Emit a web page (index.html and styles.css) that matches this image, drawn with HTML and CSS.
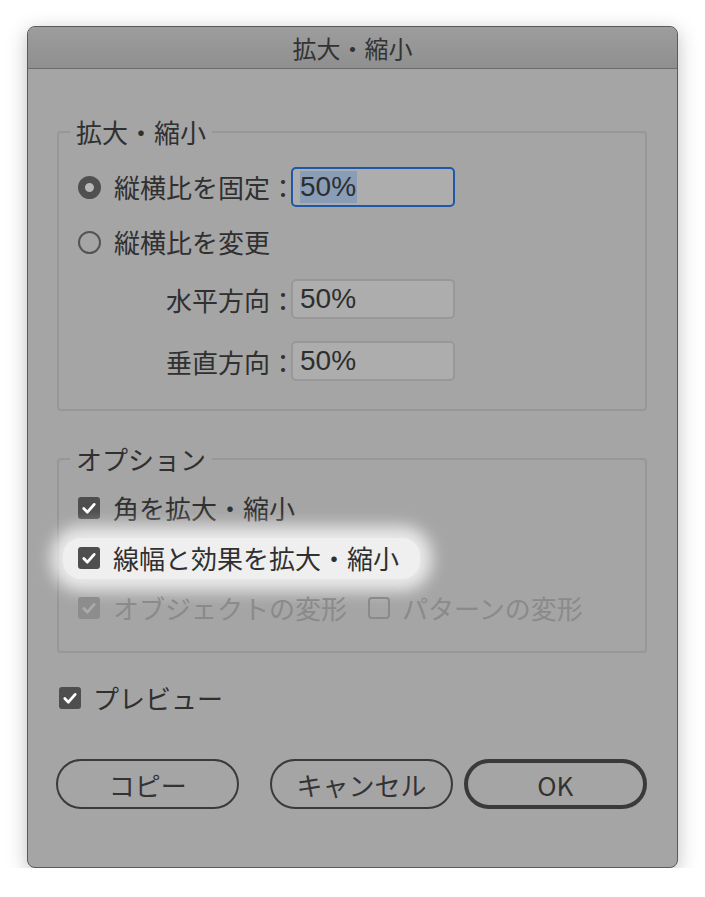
FILE: index.html
```
<!DOCTYPE html>
<html lang="ja">
<head>
<meta charset="utf-8">
<title>拡大・縮小</title>
<link rel="stylesheet" href="styles.css">
</head>
<body>
<div class="dialog">
  <div class="titlebar">拡大・縮小</div>
  <div class="content">
    <fieldset class="group group-scale">
      <legend>拡大・縮小</legend>
      <div class="row r1">
        <div class="opt"><span class="radio on"></span><span>縦横比を固定：</span></div>
        <div class="field focus"><span class="sel">50%</span></div>
      </div>
      <div class="row r2">
        <div class="opt"><span class="radio"></span><span>縦横比を変更</span></div>
      </div>
      <div class="row r3">
        <div class="lbl">水平方向：</div>
        <div class="field"><span>50%</span></div>
      </div>
      <div class="row r4">
        <div class="lbl">垂直方向：</div>
        <div class="field"><span>50%</span></div>
      </div>
    </fieldset>

    <fieldset class="group group-opts">
      <legend>オプション</legend>
      <div class="crow">
        <div class="opt"><svg class="cb" viewBox="0 0 22 22"><rect width="22" height="22" rx="3" fill="#4e4e4e"/><path d="M5.8 11.6 L9.4 15.2 L16.2 7.4" fill="none" stroke="#fff" stroke-width="2.8" stroke-linecap="round" stroke-linejoin="round"/></svg><span>角を拡大・縮小</span></div>
      </div>
      <div class="crow">
        <div class="opt glow"><svg class="cb" viewBox="0 0 22 22"><rect width="22" height="22" rx="3" fill="#4e4e4e"/><path d="M5.8 11.6 L9.4 15.2 L16.2 7.4" fill="none" stroke="#fff" stroke-width="2.8" stroke-linecap="round" stroke-linejoin="round"/></svg><span>線幅と効果を拡大・縮小</span></div>
      </div>
      <div class="crow disabled">
        <div class="opt"><svg class="cb" viewBox="0 0 22 22"><rect width="22" height="22" rx="3" fill="#8d8d8d"/><path d="M5.8 11.6 L9.4 15.2 L16.2 7.4" fill="none" stroke="#ababab" stroke-width="2.8" stroke-linecap="round" stroke-linejoin="round"/></svg><span>オブジェクトの変形</span></div>
        <div class="opt opt2"><svg class="cb" viewBox="0 0 22 22"><rect x="1" y="1" width="20" height="20" rx="3" fill="none" stroke="#8a8a8a" stroke-width="2"/></svg><span>パターンの変形</span></div>
      </div>
    </fieldset>

    <div class="crow preview">
      <div class="opt"><svg class="cb" viewBox="0 0 22 22"><rect width="22" height="22" rx="3" fill="#4e4e4e"/><path d="M5.8 11.6 L9.4 15.2 L16.2 7.4" fill="none" stroke="#fff" stroke-width="2.8" stroke-linecap="round" stroke-linejoin="round"/></svg><span>プレビュー</span></div>
    </div>

    <div class="buttons">
      <div class="btn copy">コピー</div>
      <div class="btn cancel">キャンセル</div>
      <div class="btn ok">OK</div>
    </div>
  </div>
</div>
</body>
</html>
```
FILE: styles.css
```
* { box-sizing: border-box; }
html, body { margin: 0; padding: 0; background: #ffffff; }
body {
  font-family: "Noto Sans CJK JP", "Noto Sans", sans-serif;
  color: #303030;
  padding: 26px 0 0 27px;
}
.dialog {
  width: 651px;
  height: 842px;
  background: #a5a5a5;
  border: 1px solid #5a5a5a;
  border-radius: 8px;
  box-shadow: 0 5px 20px rgba(0,0,0,0.25);
  overflow: hidden;
}
.titlebar {
  height: 42px;
  background: linear-gradient(#9d9d9d, #8f8f8f);
  border-bottom: 1px solid #6c6c6c;
  text-align: center;
  font-size: 24px;
  line-height: 41px;
  color: #333;
}
.content {
  padding: 48px 30px 0 29px;
}
.group {
  margin: 0;
  border: 2px solid #979797;
  border-radius: 4px;
  padding: 0 19px;
  min-width: 0;
}
.group legend {
  font-size: 26px;
  line-height: 30px;
  padding: 0 6px;
  margin-left: -8px;
}
.group-scale { padding-top: 20px; padding-bottom: 28px; }
.row {
  display: grid;
  grid-template-columns: 218px 164px;
  align-items: center;
  height: 40px;
  font-size: 26px;
}
.r2 { margin-top: 15px; }
.r3 { margin-top: 17px; }
.r4 { margin-top: 22px; }
.opt {
  display: flex;
  align-items: center;
  gap: 13px;
  font-size: 26px;
  line-height: 36px;
  white-space: nowrap;
}
.lbl { text-align: right; white-space: nowrap; }
.radio {
  width: 23px;
  height: 23px;
  border-radius: 50%;
  border: 2px solid #545454;
  flex: none;
}
.radio.on {
  border: 7px solid #505050;
  background: #b8b8b8;
}
.field {
  justify-self: start;
  width: 164px;
  margin-left: -5px;
  height: 40px;
  background: #adadad;
  border: 2px solid #989898;
  border-radius: 5px;
  padding-left: 7px;
  display: flex;
  align-items: center;
  font-family: "Liberation Sans", Arial, sans-serif;
  font-size: 28px;
  color: #2e2e2e;
}
.field.focus { border-color: #1d58a9; }
.sel {
  background: #8a9db7;
  line-height: 32px;
  padding-right: 1px;
}
.group-opts { margin-top: 33px; padding-top: 16px; padding-bottom: 25px; }
.crow {
  display: flex;
  align-items: center;
  height: 36px;
}
.crow + .crow { margin-top: 14px; }
.cb { width: 22px; height: 22px; flex: none; }
.glow {
  margin-left: -15px;
  padding: 0 21px 0 15px;
  height: 41px;
  background: #efefef;
  border-radius: 18px;
  box-shadow: 0 0 16px 12px rgba(244,244,244,0.88);
}
.disabled .opt { color: #8a8a8a; }
.opt2 { margin-left: 21px; gap: 12px; }
.preview { margin-top: 27px; margin-left: 2px; }
.preview .opt { gap: 12px; }
.buttons {
  display: flex;
  margin-top: 43px;
  margin-left: -1px;
}
.btn {
  height: 50px;
  border: 2px solid #3a3a3a;
  border-radius: 25px;
  display: flex;
  align-items: center;
  justify-content: center;
  font-size: 26px;
  color: #333;
}
.copy { width: 184px; margin-right: 31px; }
.cancel { width: 183px; margin-right: 11px; }
.ok { width: 184px; border-width: 4px; }
```
